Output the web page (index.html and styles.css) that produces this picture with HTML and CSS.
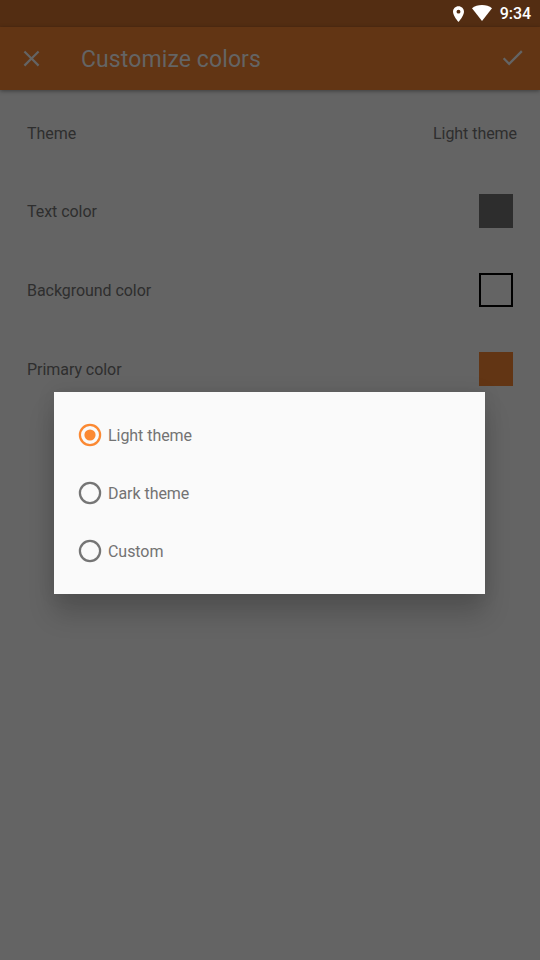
FILE: index.html
```html
<!DOCTYPE html>
<html lang="en">
<head>
<meta charset="utf-8">
<title>Customize colors</title>
<link rel="stylesheet" href="styles.css">
</head>
<body>
<div class="screen">
  <div class="status">
    <svg class="pin" viewBox="5 2 14 20"><path fill-rule="evenodd" d="M12 2C8.13 2 5 5.13 5 9c0 5.25 7 13 7 13s7-7.75 7-13c0-3.87-3.13-7-7-7zm0 9.5a2.5 2.5 0 1 1 0-5 2.5 2.5 0 0 1 0 5z"/></svg>
    <svg class="wifi" viewBox="0 0 20 16"><path d="M10 16L0 3.2C2.6 1.2 6.2 0 10 0s7.400 1.200 10 3.200z"/></svg>
    <span class="time">9:34</span>
  </div>
  <header class="toolbar">
    <svg class="icon" viewBox="0 0 24 24"><path d="M19 6.410L17.590 5 12 10.590 6.410 5 5 6.410 10.590 12 5 17.590 6.410 19 12 13.410 17.590 19 19 17.590 13.410 12z"/></svg>
    <h1>Customize colors</h1>
    <svg class="icon done" viewBox="0 0 24 24"><path d="M9 16.170L4.830 12 3.410 13.410 9 19 21 7 19.590 5.590z"/></svg>
  </header>
  <main class="settings">
    <div class="row"><span>Theme</span><span class="value">Light theme</span></div>
    <div class="row"><span>Text color</span><i class="swatch text"></i></div>
    <div class="row"><span>Background color</span><i class="swatch background"></i></div>
    <div class="row"><span>Primary color</span><i class="swatch primary"></i></div>
  </main>
  <div class="dialog" role="dialog">
    <div class="option checked"><svg class="radio" viewBox="0 0 28 28"><circle class="ring" cx="14" cy="14" r="10.1"/><circle class="dot" cx="14" cy="14" r="5.600"/></svg><span>Light theme</span></div>
    <div class="option"><svg class="radio" viewBox="0 0 28 28"><circle class="ring" cx="14" cy="14" r="10.1"/></svg><span>Dark theme</span></div>
    <div class="option"><svg class="radio" viewBox="0 0 28 28"><circle class="ring" cx="14" cy="14" r="10.1"/></svg><span>Custom</span></div>
  </div>
</div>
</body>
</html>
```
FILE: styles.css
```css
* { box-sizing: border-box; }
body { margin: 0; font-family: Roboto, sans-serif; }
.screen {
  position: relative;
  width: 540px;
  height: 960px;
  overflow: hidden;
  background: #646464;
  color: #2e2e2e;
  font-size: 16px;
  line-height: 20px;
  letter-spacing: -0.05px;
}
.status {
  display: flex;
  align-items: center;
  justify-content: flex-end;
  height: 27px;
  padding-right: 9px;
  background: #532d12;
  color: #fff;
}
.status svg { fill: #fff; }
.pin { width: 11px; height: 16px; margin: 0 8px 0 0; }
.wifi { width: 20px; height: 16px; margin: 0 8px 1px 0; }
.time { font-weight: 500; }
.toolbar {
  display: flex;
  align-items: center;
  height: 63px;
  padding: 0 14px 0 18px;
  background: #623514;
  color: #646464;
  box-shadow: 0 1px 4px rgba(0, 0, 0, .4);
}
.icon { width: 27px; height: 27px; fill: #646464; }
.icon.done { margin-bottom: 2px; }
.toolbar h1 {
  flex: 1;
  margin: 0 0 0 36px;
  padding-top: 2px;
  font-size: 23px;
  font-weight: 400;
  line-height: 28px;
  letter-spacing: .1px;
}
.settings { padding-top: 4px; }
.row {
  display: flex;
  align-items: center;
  justify-content: space-between;
  height: 79px;
  padding: 0 27px;
}
.row:first-child { height: 78px; padding-top: 1px; }
.value { margin-right: -4px; }
.swatch { width: 34px; height: 34px; margin-bottom: 1px; }
.swatch.text { background: #2d2d2d; }
.swatch.background { border: 2px solid #000; }
.swatch.primary { background: #623514; }
.dialog {
  position: absolute;
  left: 54px;
  top: 392px;
  width: 431px;
  height: 202px;
  padding: 14px 22px;
  background: #fafafa;
  color: #737373;
  box-shadow: 0 20px 24px rgba(0, 0, 0, .18), 0 0 18px rgba(0, 0, 0, .09);
}
.option { display: flex; align-items: center; height: 58px; }
.option span { padding-top: 2px; }
.radio { width: 28px; height: 28px; margin-right: 4px; }
.ring { fill: none; stroke: #757575; stroke-width: 2.25; }
.checked .ring { stroke: #fb8933; }
.dot { fill: #fb8933; }
```
